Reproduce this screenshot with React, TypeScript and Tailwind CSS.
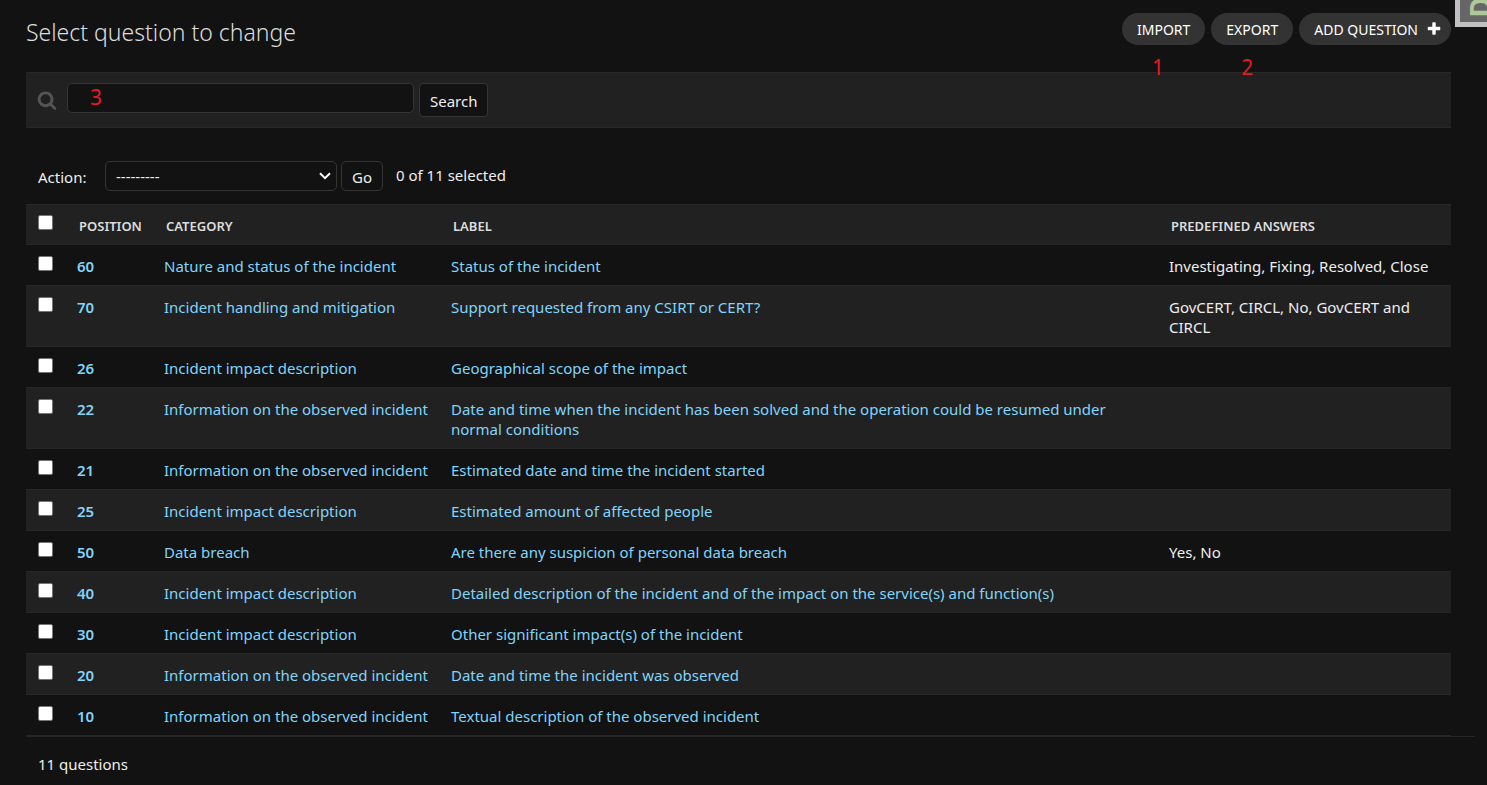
import React from "react";

type Question = {
  position: number;
  category: string;
  label: string;
  answers: string;
};

const questions: Question[] = [
  { position: 60, category: "Nature and status of the incident", label: "Status of the incident", answers: "Investigating, Fixing, Resolved, Close" },
  { position: 70, category: "Incident handling and mitigation", label: "Support requested from any CSIRT or CERT?", answers: "GovCERT, CIRCL, No, GovCERT and CIRCL" },
  { position: 26, category: "Incident impact description", label: "Geographical scope of the impact", answers: "" },
  { position: 22, category: "Information on the observed incident", label: "Date and time when the incident has been solved and the operation could be resumed under normal conditions", answers: "" },
  { position: 21, category: "Information on the observed incident", label: "Estimated date and time the incident started", answers: "" },
  { position: 25, category: "Incident impact description", label: "Estimated amount of affected people", answers: "" },
  { position: 50, category: "Data breach", label: "Are there any suspicion of personal data breach", answers: "Yes, No" },
  { position: 40, category: "Incident impact description", label: "Detailed description of the incident and of the impact on the service(s) and function(s)", answers: "" },
  { position: 30, category: "Incident impact description", label: "Other significant impact(s) of the incident", answers: "" },
  { position: 20, category: "Information on the observed incident", label: "Date and time the incident was observed", answers: "" },
  { position: 10, category: "Information on the observed incident", label: "Textual description of the observed incident", answers: "" },
];

const checkboxClass =
  "block size-[15px] appearance-none rounded-[2px] border border-[#767676] bg-white checked:bg-[#81d4fa]";

function SearchIcon() {
  return (
    <svg viewBox="0 0 1792 1792" className="size-5 fill-[#555555]" aria-hidden="true">
      <path d="M1216 832q0-185-131.5-316.5t-316.5-131.5-316.5 131.5-131.5 316.5 131.5 316.5 316.5 131.5 316.5-131.5 131.5-316.5zm512 832q0 52-38 90t-90 38q-54 0-90-38l-343-342q-179 124-399 124-143 0-273.5-55.5t-225-150-150-225-55.5-273.5 55.5-273.5 150-225 225-150 273.5-55.5 273.5 55.5 225 150 150 225 55.5 273.5q0 220-124 399l343 343q37 37 37 90z" />
    </svg>
  );
}

function PlusIcon() {
  return (
    <svg viewBox="0 0 1792 1792" className="-mr-[6px] size-4 fill-white" aria-hidden="true">
      <path d="M1600 736v192q0 40-28 68t-68 28h-416v416q0 40-28 68t-68 28h-192q-40 0-68-28t-28-68v-416h-416q-40 0-68-28t-28-68v-192q0-40 28-68t68-28h416v-416q0-40 28-68t68-28h192q40 0 68 28t28 68v416h416q40 0 68 28t28 68z" />
    </svg>
  );
}

function ChevronIcon() {
  return (
    <svg
      viewBox="0 0 12 8"
      className="pointer-events-none absolute top-[11px] right-[6px] h-2 w-3 fill-none stroke-white stroke-2"
      aria-hidden="true"
    >
      <path d="M1 1.2l5 5 5-5" />
    </svg>
  );
}

function Marker({ children, className }: { children: React.ReactNode; className: string }) {
  return (
    <span className={`pointer-events-none absolute text-[21px] leading-6 text-[#e01b24] ${className}`}>{children}</span>
  );
}

function ObjectTool({ label, marker, icon }: { label: string; marker?: string; icon?: React.ReactNode }) {
  return (
    <li className="relative">
      <a
        href="#"
        className="flex h-8 items-center gap-2 rounded-full bg-[#333333] px-[15px] text-sm text-white uppercase"
      >
        <span className="pt-[2px]">{label}</span>
        {icon}
      </a>
      {marker && <Marker className="top-[42px] left-[30px]">{marker}</Marker>}
    </li>
  );
}

export default function App() {
  return (
    <div className="relative min-h-screen overflow-hidden bg-[#121212] pr-9 pl-[26px] font-['Noto_Sans','Open_Sans',sans-serif] text-[15px] leading-5 text-[#eeeeee]">
      <header className="flex items-start justify-between pt-[13px]">
        <h1 className="pt-[3px] text-[23px] leading-8 font-light text-[#dddddd]">Select question to change</h1>
        <ul className="flex gap-[6px]">
          <ObjectTool label="Import" marker="1" />
          <ObjectTool label="Export" marker="2" />
          <ObjectTool label="Add question" icon={<PlusIcon />} />
        </ul>
      </header>

      <main className="pt-6">
        <form
          className="flex h-14 items-start border-y border-[#272727] bg-[#212121] pt-[10px] pl-[11px]"
          onSubmit={(e) => e.preventDefault()}
        >
          <label htmlFor="searchbar" aria-label="Search questions" className="pt-[7px]">
            <SearchIcon />
          </label>
          <div className="relative ml-[10px]">
            <input
              id="searchbar"
              type="text"
              className="block h-[30px] w-[347px] rounded-[5px] border border-[#353535] bg-[#121212] px-2"
            />
            <Marker className="top-[2px] left-[23px]">3</Marker>
          </div>
          <button type="submit" className="ml-[5px] h-[34px] rounded border border-[#353535] bg-[#121212] px-[10px] pt-[2px]">
            Search
          </button>
        </form>

        <div className="flex items-center pt-[33px] pb-[13px] pl-3">
          <label htmlFor="action" className="w-[67px] pt-[2px]">
            Action:
          </label>
          <div className="relative">
            <select
              id="action"
              className="block h-[30px] w-[232px] appearance-none rounded-[5px] border border-[#353535] bg-[#121212] pr-6 pl-[10px]"
            >
              <option>---------</option>
            </select>
            <ChevronIcon />
          </div>
          <button type="button" className="ml-1 h-[30px] rounded-[5px] border border-[#353535] bg-[#121212] px-[10px] pt-[2px]">
            Go
          </button>
          <span className="ml-[13px] pb-[2px]">0 of 11 selected</span>
        </div>

        <table className="w-full table-fixed border-collapse text-left">
          <colgroup>
            <col className="w-[41px]" />
            <col className="w-[87px]" />
            <col className="w-[287px]" />
            <col />
            <col className="w-[292px]" />
          </colgroup>
          <thead>
            <tr className="h-10 border-y border-[#272727] bg-[#212121] text-[13px] text-[#dddddd] uppercase">
              <th className="pt-[10px] pl-3 align-top">
                <input type="checkbox" aria-label="Select all questions" className={checkboxClass} />
              </th>
              <th className="pt-[3px] pl-3 font-semibold">Position</th>
              <th className="pt-[3px] pl-3 font-semibold">Category</th>
              <th className="pt-[3px] pl-3 font-semibold">Label</th>
              <th className="pt-[3px] pl-3 font-semibold">Predefined answers</th>
            </tr>
          </thead>
          <tbody>
            {questions.map((q) => (
              <tr key={q.position} className="border-b border-[#272727] align-top even:bg-[#212121]">
                <td className="pt-[11px] pl-3">
                  <input type="checkbox" aria-label={`Select question ${q.position}`} className={checkboxClass} />
                </td>
                <th className="px-[10px] pt-[11px] pb-[9px] font-semibold">
                  <a href="#" className="text-[#81d4fa]">{q.position}</a>
                </th>
                <td className="pt-[11px] pb-[9px] pl-[10px] whitespace-nowrap">
                  <a href="#" className="text-[#81d4fa]">{q.category}</a>
                </td>
                <td className="px-[10px] pt-[11px] pb-[9px]">
                  <a href="#" className="text-[#81d4fa]">{q.label}</a>
                </td>
                <td className="px-[10px] pt-[11px] pb-[9px]">{q.answers}</td>
              </tr>
            ))}
          </tbody>
        </table>

        <p className="-mr-6 border-t border-[#272727] pt-[17px] pb-5 pl-3">11 questions</p>
      </main>

      <div className="absolute top-0 right-0 h-[27px] w-8 overflow-hidden border-b-5 border-l-5 border-[#c0c0c0] bg-[#666666]">
        <span className="absolute bottom-[5px] left-[4px] rotate-180 text-[28px] leading-8 font-bold text-[#b0c898] [writing-mode:vertical-rl]">
          D
        </span>
      </div>
    </div>
  );
}
